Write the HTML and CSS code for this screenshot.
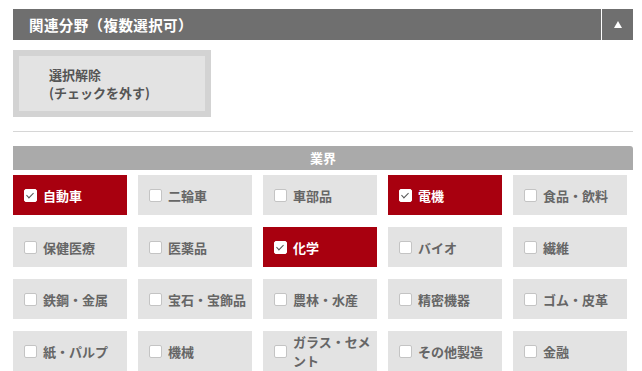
FILE: index.html
```html
<!DOCTYPE html>
<html lang="ja">
<head>
<meta charset="utf-8">
<link rel="stylesheet" href="styles.css">
</head>
<body>
<div class="panel">
  <div class="panel-head">
    <div class="panel-title">関連分野（複数選択可）</div>
    <div class="panel-toggle"><span class="tri"></span></div>
  </div>
  <div class="clear-btn">選択解除<br>(チェックを外す)</div>
  <hr class="rule">
  <div class="section-bar">業界</div>
  <div class="grid">
    <label class="item on"><span class="box"></span><span class="txt">自動車</span></label>
    <label class="item"><span class="box"></span><span class="txt">二輪車</span></label>
    <label class="item"><span class="box"></span><span class="txt">車部品</span></label>
    <label class="item on"><span class="box"></span><span class="txt">電機</span></label>
    <label class="item"><span class="box"></span><span class="txt">食品・飲料</span></label>
    <label class="item"><span class="box"></span><span class="txt">保健医療</span></label>
    <label class="item"><span class="box"></span><span class="txt">医薬品</span></label>
    <label class="item on"><span class="box"></span><span class="txt">化学</span></label>
    <label class="item"><span class="box"></span><span class="txt">バイオ</span></label>
    <label class="item"><span class="box"></span><span class="txt">繊維</span></label>
    <label class="item"><span class="box"></span><span class="txt">鉄鋼・金属</span></label>
    <label class="item"><span class="box"></span><span class="txt">宝石・宝飾品</span></label>
    <label class="item"><span class="box"></span><span class="txt">農林・水産</span></label>
    <label class="item"><span class="box"></span><span class="txt">精密機器</span></label>
    <label class="item"><span class="box"></span><span class="txt">ゴム・皮革</span></label>
    <label class="item"><span class="box"></span><span class="txt">紙・パルプ</span></label>
    <label class="item"><span class="box"></span><span class="txt">機械</span></label>
    <label class="item"><span class="box"></span><span class="txt">ガラス・セメント</span></label>
    <label class="item"><span class="box"></span><span class="txt">その他製造</span></label>
    <label class="item"><span class="box"></span><span class="txt">金融</span></label>
  </div>
</div>
</body>
</html>
```

FILE: styles.css
```css
html, body {
  margin: 0;
  padding: 0;
  background: #ffffff;
}
body {
  font-family: "Noto Sans CJK JP", "Noto Sans", sans-serif;
  overflow: hidden;
}
.panel {
  width: 620px;
  padding: 9px 0 0 13px;
}
.panel-head {
  display: flex;
  height: 31px;
}
.panel-title {
  flex: 1;
  background: #6f6f6f;
  color: #ffffff;
  font-size: 14.5px;
  font-weight: 700;
  line-height: 31px;
  padding-left: 16px;
  letter-spacing: 0.4px;
}
.panel-toggle {
  width: 31px;
  margin-left: 1px;
  background: #6f6f6f;
  display: flex;
  align-items: center;
  justify-content: center;
}
.tri {
  width: 0;
  height: 0;
  border-left: 4px solid transparent;
  border-right: 4px solid transparent;
  border-bottom: 7px solid #ffffff;
  margin-top: -1px;
}
.clear-btn {
  margin-top: 10px;
  width: 156px;
  border: 6px solid #d3d3d3;
  background: #e3e3e3;
  padding: 10px 0 9px 30px;
  font-size: 13px;
  line-height: 18px;
  color: #555555;
  font-weight: 700;
}
.rule {
  margin: 14px 0 0 0;
  border: 0;
  border-top: 1px solid #d6d6d6;
  height: 0;
}
.section-bar {
  margin-top: 14px;
  height: 24px;
  background: #aaaaaa;
  border-radius: 0 3px 0 0;
  color: #ffffff;
  font-size: 13px;
  font-weight: 700;
  line-height: 24px;
  text-align: center;
}
.grid {
  margin-top: 5px;
  display: grid;
  grid-template-columns: repeat(5, 114px);
  column-gap: 11px;
  row-gap: 12px;
}
.item {
  height: 40px;
  background: #e3e3e3;
  display: flex;
  align-items: center;
  padding: 0 4px 0 11px;
  color: #666666;
  font-size: 13px;
  font-weight: 700;
  line-height: 19px;
}
.item.on {
  background: #a8000f;
  color: #ffffff;
}
.box {
  flex: none;
  width: 11px;
  height: 11px;
  border: 1px solid #c4c4c4;
  border-radius: 2px;
  background: #ffffff;
  margin-right: 6px;
  position: relative;
}
.item.on .box {
  border-color: #ffffff;
}
.item.on .box::after {
  content: "";
  position: absolute;
  left: 3px;
  top: 1px;
  width: 3px;
  height: 6px;
  border-right: 1.5px solid #555555;
  border-bottom: 1.5px solid #555555;
  transform: rotate(45deg);
}
.txt {
  flex: 1;
}
```
